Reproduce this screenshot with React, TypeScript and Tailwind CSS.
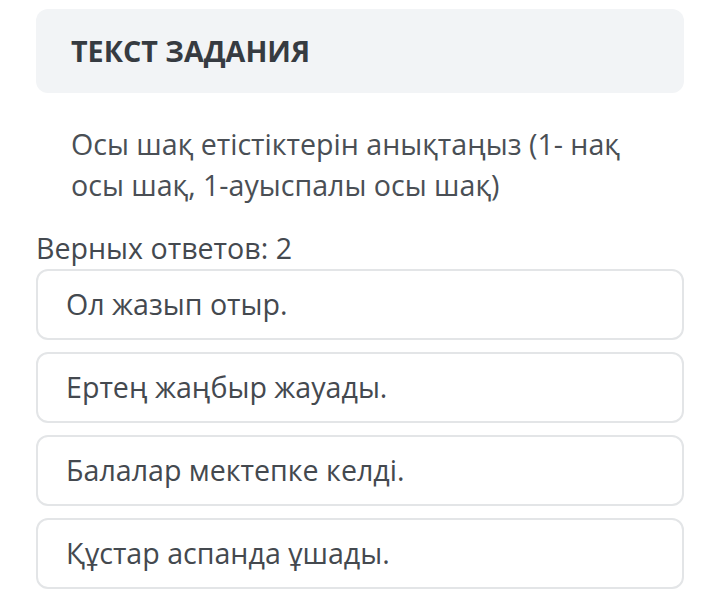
const options = [
  'Ол жазып отыр.',
  'Ертең жаңбыр жауады.',
  'Балалар мектепке келді.',
  'Құстар аспанда ұшады.',
]

export default function App() {
  return (
    <div
      className="w-[720px] h-[614px] bg-white px-9 pt-[9px] text-[#3f444a]"
      style={{ fontFamily: '"Open Sans", "Noto Sans", sans-serif' }}
    >
      <div className="h-[84px] rounded-[12px] bg-[#f2f4f6] flex items-center px-[35px]">
        <h2 className="text-[28.7px] font-bold text-[#363b41]">ТЕКСТ ЗАДАНИЯ</h2>
      </div>

      <p className="mt-[30px] px-[35px] text-[28.6px] leading-[41px] text-[#4a4f55]">
        Осы шақ етістіктерін анықтаңыз (1- нақ осы шақ, 1-ауыспалы осы шақ)
      </p>

      <div className="mt-[25px] text-[28.6px] leading-[36px] text-[#44494f]">Верных ответов: 2</div>

      <div className="mt-[3px] flex flex-col gap-[12px]">
        {options.map((o) => (
          <div
            key={o}
            className="h-[71px] rounded-[12px] border-2 border-[#e3e5e7] flex items-center pl-[28px] text-[28.6px] text-[#44494f]"
          >
            {o}
          </div>
        ))}
      </div>
    </div>
  )
}
